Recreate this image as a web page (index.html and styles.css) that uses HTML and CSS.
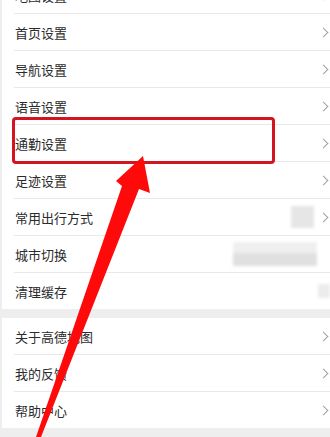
FILE: index.html
```html
<!DOCTYPE html>
<html lang="zh-CN">
    <head>
        <meta charset="UTF-8">
        <title>设置</title>
        <link rel="stylesheet" href="styles.css">
    </head>
    <body>

        <div class="lista">

            <div class="card">
                <div class="item"><span class="item-nome">地图设置</span><span class="seta"></span></div>
                <div class="item"><span class="item-nome">首页设置</span><span class="seta"></span></div>
                <div class="item"><span class="item-nome">导航设置</span><span class="seta"></span></div>
                <div class="item"><span class="item-nome">语音设置</span><span class="seta"></span></div>
                <div class="item"><span class="item-nome">通勤设置</span><span class="seta"></span></div>
                <div class="item"><span class="item-nome">足迹设置</span><span class="seta"></span></div>
                <div class="item"><span class="item-nome">常用出行方式</span><span class="borrado borrado-modo"></span><span class="seta"></span></div>
                <div class="item"><span class="item-nome">城市切换</span><span class="borrado borrado-cidade"></span></div>
                <div class="item"><span class="item-nome">清理缓存</span><span class="borrado borrado-cache"></span></div>
            </div>

            <div class="card">
                <div class="item"><span class="item-nome">关于高德地图</span><span class="seta"></span></div>
                <div class="item"><span class="item-nome">我的反馈</span><span class="seta"></span></div>
                <div class="item"><span class="item-nome">帮助中心</span><span class="seta"></span></div>
            </div>

        </div>

        <!-- marcação por cima da tela -->
        <div class="destaque"></div>

        <svg class="flecha" width="330" height="437" viewBox="0 0 330 437">
            <polygon points="143,156 150,193 139,189 41,437 36,437 122,186 116,181" fill="#ff0a0a"/>
        </svg>

    </body>
</html>
```

FILE: styles.css
```css
body{
    margin: 0;
    background-color: #eeeeee;
    font-family: "Noto Sans CJK SC", "Noto Sans", sans-serif;
    overflow: hidden;
}

.lista{
    margin-top: -23px;
}

.card{
    background-color: #fff;
    margin-left: 2px;
    margin-bottom: 9px;
}

.item{
    display: flex;
    align-items: center;
    height: 36px;
    margin-left: 12px;
    padding-left: 1px;
    border-bottom: 1px solid #e8e8e8;
}

.item:last-child{
    border-bottom: none;
}

.item-nome{
    flex: 1;
    font-size: 13px;
    color: #2b2b2b;
}

.seta{
    width: 6px;
    height: 6px;
    margin-right: 3px;
    border-top: 1px solid #a0a0a0;
    border-right: 1px solid #a0a0a0;
    transform: rotate(45deg);
}

/* valores borrados na captura */
.borrado{
    filter: blur(1.5px);
}

.borrado-modo{
    width: 23px;
    height: 22px;
    margin-right: 6px;
    background-color: #e6e6e6;
}

.borrado-cidade{
    width: 84px;
    height: 24px;
    margin-right: 13px;
    background: linear-gradient(to bottom, #efefef 45%, #e0e0e0 45%);
}

.borrado-cache{
    width: 12px;
    height: 14px;
    background-color: #ececec;
}

.destaque{
    position: absolute;
    left: 12px;
    top: 117px;
    width: 263px;
    height: 47px;
    box-sizing: border-box;
    border: 3px solid #d4141e;
    border-radius: 4px;
}

.flecha{
    position: absolute;
    left: 0;
    top: 0;
    pointer-events: none;
}
```
